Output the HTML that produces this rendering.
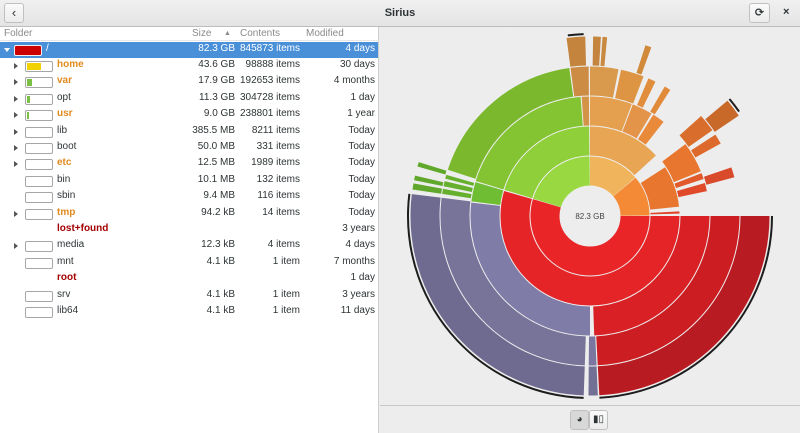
<!DOCTYPE html>
<html><head><meta charset="utf-8"><style>
*{margin:0;padding:0;box-sizing:border-box}
html,body{width:800px;height:433px;overflow:hidden}
body{font-family:"Liberation Sans","DejaVu Sans",sans-serif;font-size:10px;color:#2e3436;background:#ededed;position:relative}
svg{display:block}
.title{position:absolute;left:0;top:0;width:800px;height:27px;background:linear-gradient(#f0f0f0,#e4e4e4);border-bottom:1px solid #bdbdbd}
.btn{position:absolute;border:1px solid #c0c0c0;border-radius:3px;background:linear-gradient(#fafafa,#ececec)}
.left{position:absolute;left:0;top:27px;width:379px;height:406px;background:#fff;border-right:1px solid #cfcfcf}
.hdr{position:absolute;top:0;height:14px;width:379px;color:#8a8a8a;border-bottom:1px solid #e6e6e6}
.hdr span,.row span{position:absolute;top:1px;white-space:nowrap}
.row{position:absolute;left:0;width:378px;height:16px}
.row.sel{background:#4a90d9;color:#fff}
.box{position:absolute;left:25px;top:3px;width:28px;height:11px;border:1px solid #a6a6a6;border-radius:2px;background:#fff;overflow:hidden}
.box i{position:absolute;left:1px;top:1px;bottom:1px}
.tri{position:absolute;left:14px;top:5px;width:0;height:0;border-left:4px solid #555;border-top:3px solid transparent;border-bottom:3px solid transparent}
.bot{position:absolute;left:380px;top:405px;width:420px;height:28px;border-top:1px solid #c8c8c8;background:#ededed}
</style></head><body>
<div class="title">
 <div class="btn" style="left:4px;top:3px;width:20px;height:20px;text-align:center;font-size:13px;line-height:18px">&#8249;</div>
 <div style="position:absolute;left:0;width:800px;top:7px;text-align:center;font-weight:bold;font-size:11px">Sirius</div>
 <div class="btn" style="left:749px;top:3px;width:21px;height:20px;text-align:center;font-size:11px;line-height:18px;font-weight:bold">&#10227;</div>
 <div style="position:absolute;left:783px;top:6px;font-size:11px;font-weight:bold">×</div>
</div>
<div class="left">
 <div class="hdr"><span style="left:4px">Folder</span><span style="left:192px">Size</span><span style="left:224px;font-size:7px;top:3px">▲</span><span style="left:240px">Contents</span><span style="left:306px">Modified</span></div>
 <div class="row sel" style="top:15px"><div class="tri" style="border-left:3px solid transparent;border-right:3px solid transparent;border-top:4px solid #fff;border-bottom:0;left:4px;top:6px"></div><div class="box" style="left:14px;background:#c00;border-color:#eee"></div><span style="left:46px">/</span><span style="right:143px">82.3 GB</span><span style="right:78px">845873 items</span><span style="right:3px">4 days</span></div>
</div>
<svg style="position:absolute;left:0;top:0" width="800" height="433">
<g fill="none" stroke-width="29">
<circle cx="590" cy="216" r="45" stroke="#ea2528" pathLength="360" stroke-dasharray="196.5 400" transform="rotate(0 590 216)"/>
<circle cx="590" cy="216" r="45" stroke="#9ad842" pathLength="360" stroke-dasharray="72.5 400" transform="rotate(197 590 216)"/>
<circle cx="590" cy="216" r="45" stroke="#f0b45c" pathLength="360" stroke-dasharray="49.5 400" transform="rotate(270 590 216)"/>
<circle cx="590" cy="216" r="45" stroke="#f48a35" pathLength="360" stroke-dasharray="39.5 400" transform="rotate(320 590 216)"/>
<circle cx="590" cy="216" r="75" stroke="#e52427" pathLength="360" stroke-dasharray="196.5 400" transform="rotate(0 590 216)"/>
<circle cx="590" cy="216" r="75" stroke="#8fcf3a" pathLength="360" stroke-dasharray="72.5 400" transform="rotate(197 590 216)"/>
<circle cx="590" cy="216" r="75" stroke="#e8a553" pathLength="360" stroke-dasharray="47.5 400" transform="rotate(270 590 216)"/>
<circle cx="590" cy="216" r="75" stroke="#e8762f" pathLength="360" stroke-dasharray="27 400" transform="rotate(327 590 216)"/>
<circle cx="590" cy="216" r="75" stroke="#e0452b" pathLength="360" stroke-dasharray="1.5 400" transform="rotate(357 590 216)"/>
<circle cx="590" cy="216" r="105" stroke="#d92025" pathLength="360" stroke-dasharray="88 400" transform="rotate(0 590 216)"/>
<circle cx="590" cy="216" r="105" stroke="#807ca8" pathLength="360" stroke-dasharray="96.5 400" transform="rotate(90 590 216)"/>
<circle cx="590" cy="216" r="105" stroke="#6fbd33" pathLength="360" stroke-dasharray="9.5 400" transform="rotate(187 590 216)"/>
<circle cx="590" cy="216" r="105" stroke="#84c332" pathLength="360" stroke-dasharray="68.5 400" transform="rotate(197 590 216)"/>
<circle cx="590" cy="216" r="105" stroke="#d49448" pathLength="360" stroke-dasharray="3.5 400" transform="rotate(266 590 216)"/>
<circle cx="590" cy="216" r="105" stroke="#e4a04e" pathLength="360" stroke-dasharray="20.5 400" transform="rotate(270 590 216)"/>
<circle cx="590" cy="216" r="105" stroke="#e49448" pathLength="360" stroke-dasharray="10 400" transform="rotate(291 590 216)"/>
<circle cx="590" cy="216" r="105" stroke="#e88a3a" pathLength="360" stroke-dasharray="6 400" transform="rotate(302 590 216)"/>
<circle cx="590" cy="216" r="105" stroke="#e8762f" pathLength="360" stroke-dasharray="15 400" transform="rotate(323 590 216)"/>
<circle cx="590" cy="216" r="105" stroke="#e05a2b" pathLength="360" stroke-dasharray="3 400" transform="rotate(339 590 216)"/>
<circle cx="590" cy="216" r="105" stroke="#e04a2b" pathLength="360" stroke-dasharray="4 400" transform="rotate(344 590 216)"/>
<circle cx="590" cy="216" r="135" stroke="#cb1d22" pathLength="360" stroke-dasharray="87 400" transform="rotate(0 590 216)"/>
<circle cx="590" cy="216" r="135" stroke="#7a76a0" pathLength="360" stroke-dasharray="3 400" transform="rotate(87.5 590 216)"/>
<circle cx="590" cy="216" r="135" stroke="#777399" pathLength="360" stroke-dasharray="95 400" transform="rotate(92 590 216)"/>
<circle cx="590" cy="216" r="135" stroke="#66b02e" pathLength="360" stroke-dasharray="2 400" transform="rotate(188.5 590 216)"/>
<circle cx="590" cy="216" r="135" stroke="#66b02e" pathLength="360" stroke-dasharray="2 400" transform="rotate(191.5 590 216)"/>
<circle cx="590" cy="216" r="135" stroke="#66b02e" pathLength="360" stroke-dasharray="1.5 400" transform="rotate(194.5 590 216)"/>
<circle cx="590" cy="216" r="135" stroke="#7cb82e" pathLength="360" stroke-dasharray="64 400" transform="rotate(198 590 216)"/>
<circle cx="590" cy="216" r="135" stroke="#cc8c44" pathLength="360" stroke-dasharray="7 400" transform="rotate(262.5 590 216)"/>
<circle cx="590" cy="216" r="135" stroke="#d99a4d" pathLength="360" stroke-dasharray="11 400" transform="rotate(270 590 216)"/>
<circle cx="590" cy="216" r="135" stroke="#dd9443" pathLength="360" stroke-dasharray="9 400" transform="rotate(282 590 216)"/>
<circle cx="590" cy="216" r="135" stroke="#e08e3c" pathLength="360" stroke-dasharray="3 400" transform="rotate(293 590 216)"/>
<circle cx="590" cy="216" r="135" stroke="#e08a3a" pathLength="360" stroke-dasharray="2.5 400" transform="rotate(300 590 216)"/>
<circle cx="590" cy="216" r="135" stroke="#d96e2c" pathLength="360" stroke-dasharray="7 400" transform="rotate(318 590 216)"/>
<circle cx="590" cy="216" r="135" stroke="#dd6a2c" pathLength="360" stroke-dasharray="4 400" transform="rotate(327 590 216)"/>
<circle cx="590" cy="216" r="135" stroke="#d84a2a" pathLength="360" stroke-dasharray="4 400" transform="rotate(341 590 216)"/>
<circle cx="590" cy="216" r="165" stroke="#b81c22" pathLength="360" stroke-dasharray="87 400" transform="rotate(0 590 216)"/>
<circle cx="590" cy="216" r="165" stroke="#737096" pathLength="360" stroke-dasharray="3 400" transform="rotate(87.5 590 216)"/>
<circle cx="590" cy="216" r="165" stroke="#6e6a90" pathLength="360" stroke-dasharray="95 400" transform="rotate(92 590 216)"/>
<circle cx="590" cy="216" r="165" stroke="#5fa82b" pathLength="360" stroke-dasharray="2 400" transform="rotate(188.5 590 216)"/>
<circle cx="590" cy="216" r="165" stroke="#5fa82b" pathLength="360" stroke-dasharray="1.5 400" transform="rotate(191.5 590 216)"/>
<circle cx="590" cy="216" r="165" stroke="#5fa82b" pathLength="360" stroke-dasharray="1.5 400" transform="rotate(196 590 216)"/>
<circle cx="590" cy="216" r="165" stroke="#c4843e" pathLength="360" stroke-dasharray="6 400" transform="rotate(262.5 590 216)"/>
<circle cx="590" cy="216" r="165" stroke="#c4843e" pathLength="360" stroke-dasharray="2.5 400" transform="rotate(271 590 216)"/>
<circle cx="590" cy="216" r="165" stroke="#c88a40" pathLength="360" stroke-dasharray="1.5 400" transform="rotate(274 590 216)"/>
<circle cx="590" cy="216" r="165" stroke="#d08a3a" pathLength="360" stroke-dasharray="2 400" transform="rotate(288 590 216)"/>
<circle cx="590" cy="216" r="165" stroke="#c8692a" pathLength="360" stroke-dasharray="6 400" transform="rotate(320 590 216)"/>
</g>
<g fill="none" stroke="#1d1d1d" stroke-width="2">
<circle cx="590" cy="216" r="182" pathLength="360" stroke-dasharray="87 400" transform="rotate(0 590 216)"/>
<circle cx="590" cy="216" r="182" pathLength="360" stroke-dasharray="95 400" transform="rotate(92 590 216)"/>
<circle cx="590" cy="216" r="182" pathLength="360" stroke-dasharray="5 400" transform="rotate(263 590 216)"/>
<circle cx="590" cy="216" r="182" pathLength="360" stroke-dasharray="5 400" transform="rotate(320 590 216)"/>
</g>
<circle cx="590" cy="216" r="30" fill="#ededed"/>
<text x="590" y="219" font-size="8" text-anchor="middle" fill="#444" font-family="Liberation Sans">82.3 GB</text>
</svg>
<div class="bot">
 <div class="btn" style="left:190px;top:4px;width:19px;height:20px;background:#d8d8d8;text-align:center;font-size:10px;line-height:18px">◕</div>
 <div class="btn" style="left:209px;top:4px;width:19px;height:20px;text-align:center;font-size:10px;line-height:18px">▮▯</div>
</div>
<div style="position:absolute;left:0;top:58px;width:379px;height:270px">
<div class="row" style="top:0"><div class="tri"></div><div class="box"><i style="width:14px;background:#f2d100"></i></div><span style="left:57px;color:#e08a1e;font-weight:bold">home</span><span style="right:143px">43.6 GB</span><span style="right:78px">98888 items</span><span style="right:3px">30 days</span></div>
<div class="row" style="top:16.4px"><div class="tri"></div><div class="box"><i style="width:5px;background:#7ac143"></i></div><span style="left:57px;color:#e08a1e;font-weight:bold">var</span><span style="right:143px">17.9 GB</span><span style="right:78px">192653 items</span><span style="right:3px">4 months</span></div>
<div class="row" style="top:32.8px"><div class="tri"></div><div class="box"><i style="width:3px;background:#7ac143"></i></div><span style="left:57px">opt</span><span style="right:143px">11.3 GB</span><span style="right:78px">304728 items</span><span style="right:3px">1 day</span></div>
<div class="row" style="top:49.2px"><div class="tri"></div><div class="box"><i style="width:2px;background:#7ac143"></i></div><span style="left:57px;color:#e08a1e;font-weight:bold">usr</span><span style="right:143px">9.0 GB</span><span style="right:78px">238801 items</span><span style="right:3px">1 year</span></div>
<div class="row" style="top:65.6px"><div class="tri"></div><div class="box"></div><span style="left:57px">lib</span><span style="right:143px">385.5 MB</span><span style="right:78px">8211 items</span><span style="right:3px">Today</span></div>
<div class="row" style="top:82px"><div class="tri"></div><div class="box"></div><span style="left:57px">boot</span><span style="right:143px">50.0 MB</span><span style="right:78px">331 items</span><span style="right:3px">Today</span></div>
<div class="row" style="top:98.4px"><div class="tri"></div><div class="box"></div><span style="left:57px;color:#e08a1e;font-weight:bold">etc</span><span style="right:143px">12.5 MB</span><span style="right:78px">1989 items</span><span style="right:3px">Today</span></div>
<div class="row" style="top:114.8px"><div class="box"></div><span style="left:57px">bin</span><span style="right:143px">10.1 MB</span><span style="right:78px">132 items</span><span style="right:3px">Today</span></div>
<div class="row" style="top:131.2px"><div class="box"></div><span style="left:57px">sbin</span><span style="right:143px">9.4 MB</span><span style="right:78px">116 items</span><span style="right:3px">Today</span></div>
<div class="row" style="top:147.6px"><div class="tri"></div><div class="box"></div><span style="left:57px;color:#e08a1e;font-weight:bold">tmp</span><span style="right:143px">94.2 kB</span><span style="right:78px">14 items</span><span style="right:3px">Today</span></div>
<div class="row" style="top:164px"><span style="left:57px;color:#a40000;font-weight:bold">lost+found</span><span style="right:3px">3 years</span></div>
<div class="row" style="top:180.4px"><div class="tri"></div><div class="box"></div><span style="left:57px">media</span><span style="right:143px">12.3 kB</span><span style="right:78px">4 items</span><span style="right:3px">4 days</span></div>
<div class="row" style="top:196.8px"><div class="box"></div><span style="left:57px">mnt</span><span style="right:143px">4.1 kB</span><span style="right:78px">1 item</span><span style="right:3px">7 months</span></div>
<div class="row" style="top:213.2px"><span style="left:57px;color:#a40000;font-weight:bold">root</span><span style="right:3px">1 day</span></div>
<div class="row" style="top:229.6px"><div class="box"></div><span style="left:57px">srv</span><span style="right:143px">4.1 kB</span><span style="right:78px">1 item</span><span style="right:3px">3 years</span></div>
<div class="row" style="top:246px"><div class="box"></div><span style="left:57px">lib64</span><span style="right:143px">4.1 kB</span><span style="right:78px">1 item</span><span style="right:3px">11 days</span></div>
</div>
</body></html>
